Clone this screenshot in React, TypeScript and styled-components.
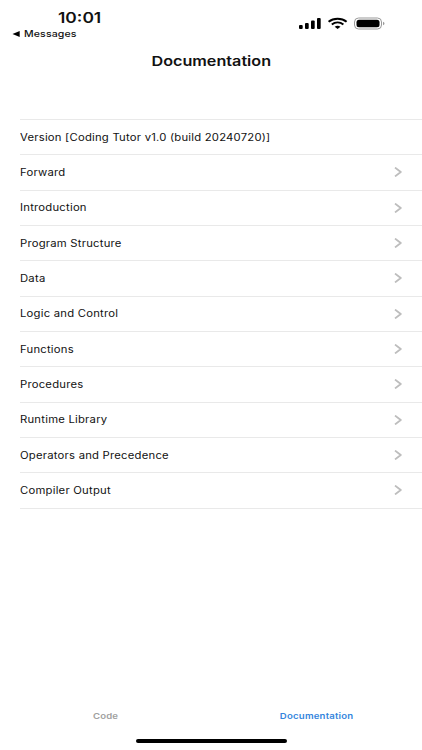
import React from "react";
import styled, { createGlobalStyle } from "styled-components";

const GlobalStyle = createGlobalStyle`
  * { box-sizing: border-box; }
  body { margin: 0; background: #fff; overflow: hidden; }
`;

const Screen = styled.main`
  width: 422px;
  height: 750px;
  display: flex;
  flex-direction: column;
  background: #fff;
  color: #111;
  font-family: Inter, "Liberation Sans", sans-serif;
`;

const StatusBar = styled.header`
  height: 44px;
  display: flex;
  justify-content: space-between;
`;

const StatusLeft = styled.div`
  display: flex;
  flex-direction: column;
  padding: 9px 0 0 12px;
`;

const Label = styled.span<{ $stretch?: number; $origin?: string }>`
  display: inline-block;
  white-space: nowrap;
  transform: scaleX(${(p) => p.$stretch ?? 1.2});
  transform-origin: ${(p) => p.$origin ?? "left"} center;
`;

const Time = styled.div`
  padding-left: 45.6px;
  font-size: 14.5px;
  line-height: 18px;
  font-weight: 600;
`;

const BackLink = styled.div`
  display: flex;
  align-items: center;
  gap: 4px;
  font-size: 8.8px;
  letter-spacing: 0.1px;
  line-height: 13px;
  font-weight: 500;
`;

const StatusIcons = styled.div`
  display: flex;
  align-items: flex-start;
  padding: 17px 37px 0 0;
`;

const NavTitle = styled.h1`
  margin: 0;
  height: 75px;
  padding-top: 8px;
  text-align: center;
  font-size: 13.6px;
  line-height: 18px;
  font-weight: 600;
`;

const List = styled.ul`
  list-style: none;
  margin: 0 0 0 20px;
  padding: 0;
  border-top: 1px solid #e9e9e9;
`;

const Row = styled.li`
  height: 35.34px;
  display: flex;
  align-items: center;
  justify-content: space-between;
  padding: 0 20px 0.1px 0;
  border-bottom: 1px solid #e9e9e9;
  font-size: 9.8px;
  letter-spacing: 0.2px;
`;

const TabBar = styled.nav`
  margin-top: auto;
  height: 43px;
  display: grid;
  grid-template-columns: 1fr 1fr;
`;

const Tab = styled.div<{ $active?: boolean }>`
  height: 18px;
  text-align: center;
  font-size: 8px;
  letter-spacing: 0.16px;
  line-height: 18px;
  font-weight: 600;
  color: ${(p) => (p.$active ? "#3385dd" : "#a0a0a0")};
`;

const HomeIndicator = styled.div`
  grid-column: 1 / -1;
  justify-self: center;
  width: 151px;
  height: 4px;
  margin-top: 7px;
  border-radius: 2px;
  background: #000;
`;

const Chevron = () => (
  <svg width="8" height="10" viewBox="0 0 8 10" fill="none">
    <path d="M1 .6 6.8 5 1 9.4" stroke="#bdbdbd" strokeWidth="1.8" strokeLinejoin="round" />
  </svg>
);

const chapters = [
  "Forward",
  "Introduction",
  "Program Structure",
  "Data",
  "Logic and Control",
  "Functions",
  "Procedures",
  "Runtime Library",
  "Operators and Precedence",
  "Compiler Output",
];

export default function App() {
  return (
    <Screen>
      <GlobalStyle />
      <StatusBar>
        <StatusLeft>
          <Time><Label>10:01</Label></Time>
          <BackLink>
            <svg width="8" height="6" viewBox="0 0 8 6"><path d="M.5 3 7.7 0v6z" fill="#000" /></svg>
            <Label>Messages</Label>
          </BackLink>
        </StatusLeft>
        <StatusIcons>
          <svg width="86" height="13" viewBox="0 0 86 13">
            <rect x="0" y="8" width="3.7" height="4" rx="1" />
            <rect x="6" y="6" width="3.7" height="6" rx="1" />
            <rect x="12" y="3.5" width="3.7" height="8.5" rx="1" />
            <rect x="18" y="1" width="3.7" height="11" rx="1" />
            <g fill="none" stroke="#000" strokeWidth="2">
              <path d="M29.6 4.8c5-4 13-4 18 0" />
              <path d="M32.8 7.5c3.4-2.6 8.2-2.6 11.6 0" />
            </g>
            <path d="M35.7 9.7c1.8-1.4 4-1.4 5.8 0L38.6 12z" />
            <rect x="55.5" y="1" width="27" height="11" rx="4" fill="none" stroke="#999" />
            <rect x="57.5" y="2.7" width="23" height="7.6" rx="2.5" />
            <path d="M84 4.8c2 .6 2 2.8 0 3.4z" fill="#999" />
          </svg>
        </StatusIcons>
      </StatusBar>
      <NavTitle><Label $origin="center" $stretch={1.19}>Documentation</Label></NavTitle>
      <List>
        <Row><Label $stretch={1.15}>Version [Coding Tutor v1.0 (build 20240720)]</Label></Row>
        {chapters.map((name) => (
          <Row key={name}><Label $stretch={1.15}>{name}</Label><Chevron /></Row>
        ))}
      </List>
      <TabBar>
        <Tab><Label $origin="center">Code</Label></Tab>
        <Tab $active><Label $origin="center">Documentation</Label></Tab>
        <HomeIndicator />
      </TabBar>
    </Screen>
  );
}
